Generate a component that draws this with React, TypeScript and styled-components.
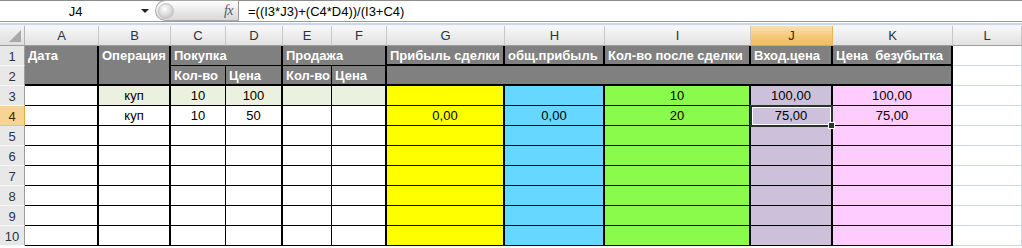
import React from 'react';
import styled, { createGlobalStyle } from 'styled-components';

type Edge = 'thick' | 'thin' | 'grid' | 'none';

const edge = (e: Edge = 'none') =>
  e === 'thick'
    ? '2px solid #000'
    : e === 'thin'
    ? '1px solid #000'
    : e === 'grid'
    ? '1px solid #d0d7e5'
    : 'none';

const GlobalStyle = createGlobalStyle`
  html, body {
    margin: 0;
    padding: 0;
    background: #fff;
    overflow: hidden;
  }
  body {
    font-family: "Liberation Sans", Arial, sans-serif;
  }
`;

const Window = styled.div`
  width: 1022px;
  height: 248px;
  overflow: hidden;
  display: flex;
  flex-direction: column;
`;

const FormulaBar = styled.div`
  height: 22px;
  box-sizing: border-box;
  display: flex;
  align-items: stretch;
  border-top: 1px solid #8d8d8d;
  border-bottom: 1px solid #9a9a9a;
  background: #fff;
`;

const NameBox = styled.div`
  width: 155px;
  display: flex;
  align-items: center;
  justify-content: space-between;
  padding: 0 5px 0 0;
  box-sizing: border-box;
  font-size: 13px;
  color: #000;
`;

const NameText = styled.span`
  flex: 1;
  text-align: center;
  padding-left: 10px;
`;

const DropArrow = styled.span`
  width: 0;
  height: 0;
  border-left: 4px solid transparent;
  border-right: 4px solid transparent;
  border-top: 4px solid #222;
  margin-right: 1px;
`;

const Pill = styled.div`
  width: 84px;
  box-sizing: border-box;
  display: flex;
  align-items: center;
  justify-content: space-between;
  padding: 0 5px 0 2px;
  border: 1px solid #a7a7a7;
  border-right-color: #9a9a9a;
  border-radius: 11px 0 0 11px;
  background: linear-gradient(to bottom, #ffffff, #e6e6e6 60%, #d9d9d9);
  margin-top: -1px;
`;

const Grip = styled.span`
  width: 14px;
  height: 14px;
  border-radius: 50%;
  background: radial-gradient(circle at 40% 35%, #ffffff, #d4d4d4 60%, #b0b0b0);
  border: 1px solid #c4c4c4;
`;

const Fx = styled.span`
  font-family: "Liberation Serif", "Times New Roman", serif;
  font-style: italic;
  font-size: 14px;
  color: #5a5a5a;
  letter-spacing: -0.5px;
`;

const FormulaText = styled.div`
  flex: 1;
  display: flex;
  align-items: center;
  padding-left: 9px;
  font-size: 13px;
  color: #000;
`;

const Strip = styled.div`
  height: 4px;
  background: linear-gradient(to bottom, #fff 0 1px, #c9d8ec 1px 3px, #f4f4f4 3px);
`;

const Sheet = styled.div`
  display: grid;
  grid-template-columns: 25px 74px 72px 55px 57px 49px 55px 118px 100px 146px 82px 120px 69px;
  grid-template-rows: 20px repeat(10, 20px);
`;

const Corner = styled.div`
  position: relative;
  box-sizing: border-box;
  background: linear-gradient(to bottom, #f4f4f4, #dedede);
  border-right: 1px solid #b5b5b5;
  border-bottom: 1px solid #9e9e9e;
  &::after {
    content: '';
    position: absolute;
    right: 3px;
    bottom: 3px;
    width: 0;
    height: 0;
    border-left: 12px solid transparent;
    border-bottom: 12px solid #a9a9a9;
  }
`;

const ColHead = styled.div<{ $active?: boolean }>`
  box-sizing: border-box;
  display: flex;
  align-items: center;
  justify-content: center;
  font-size: 13px;
  color: ${(p) => (p.$active ? '#3a2a10' : '#27343f')};
  background: ${(p) =>
    p.$active
      ? 'linear-gradient(to bottom, #fae0b0, #f6c979 55%, #f2bb60)'
      : 'linear-gradient(to bottom, #f8f8f8, #ececec 55%, #e1e1e1)'};
  border-right: 1px solid ${(p) => (p.$active ? '#f0b44f' : '#c8c8c8')};
  border-bottom: 1px solid ${(p) => (p.$active ? '#e3a83e' : '#9e9e9e')};
`;

const RowHead = styled.div<{ $active?: boolean }>`
  box-sizing: border-box;
  display: flex;
  align-items: center;
  justify-content: center;
  font-size: 13px;
  padding-top: 1px;
  color: ${(p) => (p.$active ? '#3a2a10' : '#27343f')};
  background: ${(p) => (p.$active ? '#f8d494' : '#e8e8e8')};
  border-right: 1px solid ${(p) => (p.$active ? '#e3a83e' : '#9e9e9e')};
  border-bottom: 1px solid ${(p) => (p.$active ? '#f0c070' : '#f7f7f7')};
`;

const Cell = styled.div<{
  $bg?: string;
  $right?: Edge;
  $bottom?: Edge;
  $bold?: boolean;
  $align?: 'left' | 'center';
  $span?: number;
  $rows?: number;
  $top?: boolean;
}>`
  position: relative;
  box-sizing: border-box;
  display: flex;
  align-items: ${(p) => (p.$top ? 'flex-start' : 'center')};
  justify-content: ${(p) => (p.$align === 'left' ? 'flex-start' : 'center')};
  padding: ${(p) => (p.$top ? '1px 3px 0' : '1px 3px 0')};
  line-height: 18px;
  font-size: 13px;
  white-space: nowrap;
  overflow: hidden;
  font-weight: ${(p) => (p.$bold ? 700 : 400)};
  color: ${(p) => (p.$bold ? '#fff' : '#000')};
  background: ${(p) => p.$bg || '#fff'};
  border-right: ${(p) => edge(p.$right)};
  border-bottom: ${(p) => edge(p.$bottom)};
  grid-column: span ${(p) => p.$span || 1};
  grid-row: span ${(p) => p.$rows || 1};
`;

const Selection = styled.div`
  position: absolute;
  left: -1px;
  top: -1px;
  right: -2px;
  bottom: -2px;
  border: 2px solid #273427;
  box-shadow: inset 0 0 0 1px #fff;
  pointer-events: none;
  &::after {
    content: '';
    position: absolute;
    right: -4px;
    bottom: -4px;
    width: 5px;
    height: 5px;
    background: #273427;
    border: 1px solid #fff;
  }
`;

const SelCell = styled(Cell)`
  overflow: visible;
  z-index: 2;
`;

const GRAY = '#808080';
const LIGHT_GREEN = '#ebf1de';

const columns = ['A', 'B', 'C', 'D', 'E', 'F', 'G', 'H', 'I', 'J', 'K', 'L'];
const rightEdges: Edge[] = ['thick', 'thick', 'thin', 'thick', 'thin', 'thick', 'thick', 'thick', 'thick', 'thick', 'thick', 'grid'];
const fills: Record<string, string> = {
  G: '#ffff00',
  H: '#66d8ff',
  I: '#8bfb4b',
  J: '#ccc0da',
  K: '#ffccff',
};

const values: Record<number, Record<string, string>> = {
  3: { B: 'куп', C: '10', D: '100', I: '10', J: '100,00', K: '100,00' },
  4: { B: 'куп', C: '10', D: '50', G: '0,00', H: '0,00', I: '20', J: '75,00', K: '75,00' },
};

const fillFor = (col: string, row: number) => {
  if (fills[col]) return fills[col];
  if (row === 3 && 'BCDEF'.includes(col)) return LIGHT_GREEN;
  return '#fff';
};

const DataRow = ({ row }: { row: number }) => (
  <>
    <RowHead $active={row === 4}>{row}</RowHead>
    {columns.map((col, i) => {
      const text = values[row]?.[col] || '';
      const props = {
        $bg: fillFor(col, row),
        $right: rightEdges[i],
        $bottom: (col === 'L' ? 'grid' : 'thin') as Edge,
      };
      if (col === 'J' && row === 4) {
        return (
          <SelCell key={col} {...props}>
            {text}
            <Selection />
          </SelCell>
        );
      }
      return (
        <Cell key={col} {...props}>
          {text}
        </Cell>
      );
    })}
  </>
);

export default function App() {
  return (
    <Window>
      <GlobalStyle />
      <FormulaBar>
        <NameBox>
          <NameText>J4</NameText>
          <DropArrow />
        </NameBox>
        <Pill>
          <Grip />
          <Fx>fx</Fx>
        </Pill>
        <FormulaText>=((I3*J3)+(C4*D4))/(I3+C4)</FormulaText>
      </FormulaBar>
      <Strip />
      <Sheet>
        <Corner />
        {columns.map((c) => (
          <ColHead key={c} $active={c === 'J'}>
            {c}
          </ColHead>
        ))}

        {/* row 1 */}
        <RowHead>1</RowHead>
        <Cell $bg={GRAY} $bold $align="left" $top $rows={2} $right="thick" $bottom="thick">
          Дата
        </Cell>
        <Cell $bg={GRAY} $bold $align="left" $top $rows={2} $right="thick" $bottom="thick">
          Операция
        </Cell>
        <Cell $bg={GRAY} $bold $align="left" $span={2} $right="thick" $bottom="thin">
          Покупка
        </Cell>
        <Cell $bg={GRAY} $bold $align="left" $span={2} $right="thick" $bottom="thin">
          Продажа
        </Cell>
        <Cell $bg={GRAY} $bold $align="left" $right="thick" $bottom="thick">
          Прибыль сделки
        </Cell>
        <Cell $bg={GRAY} $bold $align="left" $right="thick" $bottom="thick">
          общ.прибыль
        </Cell>
        <Cell $bg={GRAY} $bold $align="left" $right="thick" $bottom="thick">
          Кол-во после сделки
        </Cell>
        <Cell $bg={GRAY} $bold $align="left" $right="thick" $bottom="thick">
          Вход.цена
        </Cell>
        <Cell $bg={GRAY} $bold $align="left" $right="thick" $bottom="thick">
          Цена&nbsp; безубытка
        </Cell>
        <Cell $right="grid" $bottom="grid" />

        {/* row 2 */}
        <RowHead>2</RowHead>
        <Cell $bg={GRAY} $bold $align="left" $right="thin" $bottom="thick">
          Кол-во
        </Cell>
        <Cell $bg={GRAY} $bold $align="left" $right="thick" $bottom="thick">
          Цена
        </Cell>
        <Cell $bg={GRAY} $bold $align="left" $right="thin" $bottom="thick">
          Кол-во
        </Cell>
        <Cell $bg={GRAY} $bold $align="left" $right="thick" $bottom="thick">
          Цена
        </Cell>
        <Cell $bg={GRAY} $span={5} $right="thick" $bottom="thick" />
        <Cell $right="grid" $bottom="grid" />

        {[3, 4, 5, 6, 7, 8, 9, 10].map((r) => (
          <DataRow key={r} row={r} />
        ))}
      </Sheet>
    </Window>
  );
}
